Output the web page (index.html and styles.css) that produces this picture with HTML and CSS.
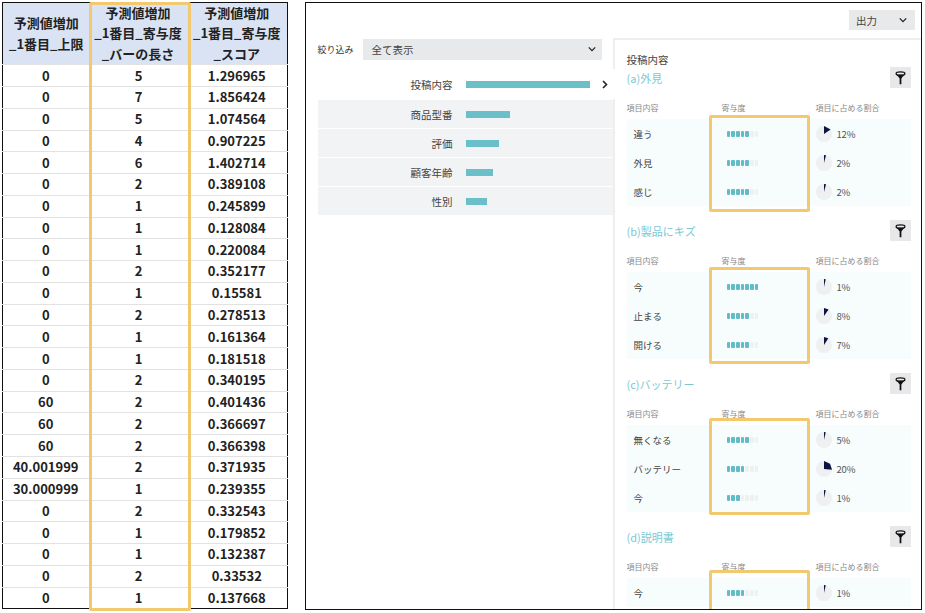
FILE: index.html
```html
<!DOCTYPE html>
<html lang="ja">
<head>
  <meta charset="UTF-8">
  <meta name="viewport" content="width=device-width, initial-scale=1.0">
  <title>予測値増加</title>
  <link rel="stylesheet" href="styles.css">
</head>
<body>
  <svg class="defs" width="0" height="0">
    <symbol id="chev-down" viewBox="0 0 10 6"><path d="M1 1l4 4 4-4" fill="none" stroke="#222" stroke-width="1.6"/></symbol>
    <symbol id="funnel" viewBox="0 0 12 16"><ellipse cx="6" cy="3" rx="5" ry="2" fill="none" stroke="#111" stroke-width="1.5"/><path d="M1.5 4L5 8.5V15h2V8.5L10.500 4z" fill="#111"/></symbol>
  </svg>

  <div class="sheet">
    <table class="data">
      <thead>
        <tr>
          <th>予測値増加<br>_1番目_上限</th>
          <th>予測値増加<br>_1番目_寄与度<br>_バーの長さ</th>
          <th>予測値増加<br>_1番目_寄与度<br>_スコア</th>
        </tr>
      </thead>
      <tbody>
        <tr><td>0</td><td>5</td><td>1.296965</td></tr>
        <tr><td>0</td><td>7</td><td>1.856424</td></tr>
        <tr><td>0</td><td>5</td><td>1.074564</td></tr>
        <tr><td>0</td><td>4</td><td>0.907225</td></tr>
        <tr><td>0</td><td>6</td><td>1.402714</td></tr>
        <tr><td>0</td><td>2</td><td>0.389108</td></tr>
        <tr><td>0</td><td>1</td><td>0.245899</td></tr>
        <tr><td>0</td><td>1</td><td>0.128084</td></tr>
        <tr><td>0</td><td>1</td><td>0.220084</td></tr>
        <tr><td>0</td><td>2</td><td>0.352177</td></tr>
        <tr><td>0</td><td>1</td><td>0.15581</td></tr>
        <tr><td>0</td><td>2</td><td>0.278513</td></tr>
        <tr><td>0</td><td>1</td><td>0.161364</td></tr>
        <tr><td>0</td><td>1</td><td>0.181518</td></tr>
        <tr><td>0</td><td>2</td><td>0.340195</td></tr>
        <tr><td>60</td><td>2</td><td>0.401436</td></tr>
        <tr><td>60</td><td>2</td><td>0.366697</td></tr>
        <tr><td>60</td><td>2</td><td>0.366398</td></tr>
        <tr><td>40.001999</td><td>2</td><td>0.371935</td></tr>
        <tr><td>30.000999</td><td>1</td><td>0.239355</td></tr>
        <tr><td>0</td><td>2</td><td>0.332543</td></tr>
        <tr><td>0</td><td>1</td><td>0.179852</td></tr>
        <tr><td>0</td><td>1</td><td>0.132387</td></tr>
        <tr><td>0</td><td>2</td><td>0.33532</td></tr>
        <tr><td>0</td><td>1</td><td>0.137668</td></tr>
      </tbody>
    </table>
    <div class="mark mark-col"></div>
  </div>

  <div class="panel">
    <div class="topbar">
      <div class="pick pick-out">出力<svg class="chev"><use href="#chev-down"/></svg></div>
    </div>
    <div class="split">
      <div class="side">
        <div class="filter">
          <span class="filter-label">絞り込み</span>
          <div class="pick pick-all">全て表示<svg class="chev"><use href="#chev-down"/></svg></div>
        </div>
        <div class="cat cat-on"><span class="cat-name">投稿内容</span><span class="cat-bar w-124"></span><span class="cat-arrow"><svg width="6" height="9" viewBox="0 0 6 9"><path d="M1 1l3.500 3.500L1 8" fill="none" stroke="#222" stroke-width="1.600"/></svg></span></div>
        <div class="cat"><span class="cat-name">商品型番</span><span class="cat-bar w-44"></span></div>
        <div class="cat"><span class="cat-name">評価</span><span class="cat-bar w-33"></span></div>
        <div class="cat"><span class="cat-name">顧客年齢</span><span class="cat-bar w-27"></span></div>
        <div class="cat"><span class="cat-name">性別</span><span class="cat-bar w-21"></span></div>
      </div>

      <div class="detail">
        <div class="detail-title">投稿内容</div>

        <section class="group">
          <div class="group-head">
            <span class="group-name">(a)外見</span>
            <button class="funnel-btn"><svg width="11" height="14"><use href="#funnel"/></svg></button>
          </div>
          <div class="cols"><span>項目内容</span><span>寄与度</span><span>項目に占める割合</span></div>
          <div class="rows">
            <div class="row"><span>違う</span><span class="meter"><i class="on"></i><i class="on"></i><i class="on"></i><i class="on"></i><i class="on"></i><i></i><i></i></span><span class="share"><svg class="pie" viewBox="0 0 16 16"><circle cx="8" cy="8" r="8"/><path d="M8 8V0L14.600 3.400z"/></svg>12%</span></div>
            <div class="row"><span>外見</span><span class="meter"><i class="on"></i><i class="on"></i><i class="on"></i><i class="on"></i><i class="on"></i><i></i><i></i></span><span class="share"><svg class="pie" viewBox="0 0 16 16"><circle cx="8" cy="8" r="8"/><path d="M8 8V0L10 .3z"/></svg>2%</span></div>
            <div class="row"><span>感じ</span><span class="meter"><i class="on"></i><i class="on"></i><i class="on"></i><i class="on"></i><i class="on"></i><i></i><i></i></span><span class="share"><svg class="pie" viewBox="0 0 16 16"><circle cx="8" cy="8" r="8"/><path d="M8 8V0L10 .3z"/></svg>2%</span></div>
            <div class="mark mark-a"></div>
          </div>
        </section>

        <section class="group">
          <div class="group-head">
            <span class="group-name">(b)製品にキズ</span>
            <button class="funnel-btn"><svg width="11" height="14"><use href="#funnel"/></svg></button>
          </div>
          <div class="cols"><span>項目内容</span><span>寄与度</span><span>項目に占める割合</span></div>
          <div class="rows">
            <div class="row"><span>今</span><span class="meter"><i class="on"></i><i class="on"></i><i class="on"></i><i class="on"></i><i class="on"></i><i class="on"></i><i class="on"></i></span><span class="share"><svg class="pie" viewBox="0 0 16 16"><circle cx="8" cy="8" r="8"/><path d="M8 8V0L9.700 .2z"/></svg>1%</span></div>
            <div class="row"><span>止まる</span><span class="meter"><i class="on"></i><i class="on"></i><i class="on"></i><i class="on"></i><i class="on"></i><i></i><i></i></span><span class="share"><svg class="pie" viewBox="0 0 16 16"><circle cx="8" cy="8" r="8"/><path d="M8 8V0L12.600 1.400z"/></svg>8%</span></div>
            <div class="row"><span>開ける</span><span class="meter"><i class="on"></i><i class="on"></i><i class="on"></i><i class="on"></i><i class="on"></i><i></i><i></i></span><span class="share"><svg class="pie" viewBox="0 0 16 16"><circle cx="8" cy="8" r="8"/><path d="M8 8V0L12.300 1.200z"/></svg>7%</span></div>
            <div class="mark mark-b"></div>
          </div>
        </section>

        <section class="group">
          <div class="group-head">
            <span class="group-name">(c)バッテリー</span>
            <button class="funnel-btn"><svg width="11" height="14"><use href="#funnel"/></svg></button>
          </div>
          <div class="cols"><span>項目内容</span><span>寄与度</span><span>項目に占める割合</span></div>
          <div class="rows">
            <div class="row"><span>無くなる</span><span class="meter"><i class="on"></i><i class="on"></i><i class="on"></i><i class="on"></i><i class="on"></i><i></i><i></i></span><span class="share"><svg class="pie" viewBox="0 0 16 16"><circle cx="8" cy="8" r="8"/><path d="M8 8V0L9.700 .2z"/></svg>5%</span></div>
            <div class="row"><span>バッテリー</span><span class="meter"><i class="on"></i><i class="on"></i><i class="on"></i><i class="on"></i><i></i><i></i><i></i></span><span class="share"><svg class="pie" viewBox="0 0 16 16"><circle cx="8" cy="8" r="8"/><path d="M8 8V0L14 2.700 16 8.700z"/></svg>20%</span></div>
            <div class="row"><span>今</span><span class="meter"><i class="on"></i><i class="on"></i><i class="on"></i><i></i><i></i><i></i><i></i></span><span class="share"><svg class="pie" viewBox="0 0 16 16"><circle cx="8" cy="8" r="8"/><path d="M8 8V0L9.700 .2z"/></svg>1%</span></div>
            <div class="mark mark-c"></div>
          </div>
        </section>

        <section class="group">
          <div class="group-head">
            <span class="group-name">(d)説明書</span>
            <button class="funnel-btn"><svg width="11" height="14"><use href="#funnel"/></svg></button>
          </div>
          <div class="cols"><span>項目内容</span><span>寄与度</span><span>項目に占める割合</span></div>
          <div class="rows">
            <div class="row"><span>今</span><span class="meter"><i class="on"></i><i class="on"></i><i class="on"></i><i class="on"></i><i></i><i></i><i></i></span><span class="share"><svg class="pie" viewBox="0 0 16 16"><circle cx="8" cy="8" r="8"/><path d="M8 8V0L9.700 .2z"/></svg>1%</span></div>
            <div class="mark mark-d"></div>
          </div>
        </section>
      </div>
    </div>
  </div>
</body>
</html>
```

FILE: styles.css
```css
* {
  box-sizing: border-box;
}
html, body {
  height: 100%;
}
body {
  margin: 0;
  padding: 2px 3px 3px 2px;
  display: flex;
  gap: 17px;
  background: white;
  overflow: hidden;
  font-family: "Noto Sans CJK JP", "Noto Sans", sans-serif;
  color: #333;
}
.defs {
  position: absolute;
}

/* left: spreadsheet */
.sheet {
  position: relative;
  width: 286px;
  height: 608px;
  flex: none;
}
.data {
  width: 286px;
  height: 607px;
  table-layout: fixed;
  border-collapse: collapse;
  border: 1.5px solid #111;
  font-weight: bold;
  font-size: 13px;
  color: #222;
  text-align: center;
}
.data th {
  height: 61px;
  padding: 0;
  background: #dae3f3;
  font-size: 13px;
  line-height: 20.400px;
  font-weight: bold;
}
.data td {
  height: 21.780px;
  padding: 0;
  line-height: 18px;
  border-top: 1.5px solid #e2e2e2;
}
.data td:first-child {
  border-right: 2px solid #e2e2e2;
}
.data th:nth-child(1) { width: 87px; }
.data th:nth-child(2) { width: 97px; }

.mark {
  position: absolute;
  border: 3px solid #f3c96f;
  border-radius: 2px;
  pointer-events: none;
}
.mark-col { left: 87px; top: 0; width: 102px; height: 609px; }
.mark-a { left: 82px; top: -4px; width: 101px; height: 97px; }
.mark-b { left: 82px; top: -5px; width: 101px; height: 97px; }
.mark-c { left: 82px; top: -7px; width: 101px; height: 97px; }
.mark-d { left: 82px; top: -8px; width: 101px; height: 60px; }

/* right: analysis panel */
.panel {
  flex: 1;
  height: 608px;
  display: flex;
  flex-direction: column;
  border: 1.5px solid #111;
  overflow: hidden;
}
.topbar {
  height: 35px;
  flex: none;
  display: flex;
  justify-content: flex-end;
  padding: 7px 6px 0 0;
}
.pick {
  display: flex;
  align-items: center;
  justify-content: space-between;
  background: #e8e9eb;
  font-size: 10.500px;
  color: #444;
}
.chev {
  width: 8px;
  height: 6px;
}
.pick-out {
  width: 66px;
  height: 20px;
  padding: 0 8px 0 7px;
}
.split {
  flex: 1;
  display: flex;
  min-height: 0;
}
.side {
  width: 306.500px;
  flex: none;
  padding-left: 11.500px;
}
.filter {
  display: flex;
  align-items: center;
  height: 22px;
  margin-bottom: 9px;
}
.filter-label {
  width: 45px;
  font-size: 9px;
  color: #333;
}
.pick-all {
  width: 239px;
  height: 21px;
  padding: 0 6px 0 9px;
}
.cat {
  display: flex;
  align-items: center;
  height: 28px;
  margin-bottom: 1px;
  background: #f2f3f5;
  font-size: 10.500px;
  color: #444;
}
.cat-on {
  position: relative;
  height: 30px;
  margin-right: -2px;
  background: white;
}
.cat-name {
  width: 135px;
  text-align: right;
  flex: none;
}
.cat-bar {
  height: 7px;
  margin-left: 13px;
  background: #6bbfc9;
}
.cat-arrow {
  display: flex;
  margin-left: 12px;
}
.w-124 { width: 124px; }
.w-44 { width: 44px; }
.w-33 { width: 33px; }
.w-27 { width: 27px; }
.w-21 { width: 21px; }

.detail {
  flex: 1;
  min-width: 0;
  border-top: 2px solid #eeeeee;
  border-left: 2px solid #eeeeee;
  padding: 13px 10.500px 0 12px;
}
.detail-title {
  height: 14px;
  line-height: 14px;
  font-size: 10.500px;
  color: #444;
}
.group {
  margin-bottom: 14px;
}
.group-head {
  display: flex;
  justify-content: space-between;
  height: 21px;
}
.group-name {
  font-size: 11px;
  line-height: 22px;
  color: #7cc8d2;
}
.funnel-btn {
  width: 21px;
  height: 21px;
  padding: 0;
  display: flex;
  align-items: center;
  justify-content: center;
  border: 0;
  background: #e8e8ea;
}
.cols {
  display: grid;
  grid-template-columns: 95px 94px 1fr;
  height: 31px;
  padding-top: 14px;
  font-size: 8px;
  line-height: 12px;
  color: #888;
}
.rows {
  position: relative;
  background: #f7fcfd;
}
.row {
  display: grid;
  grid-template-columns: 95px 94px 1fr;
  align-items: center;
  height: 29px;
  font-size: 9.500px;
  color: #444;
}
.row > span:first-child {
  padding-left: 7px;
}
.meter {
  display: flex;
  gap: 1px;
  padding-left: 5px;
}
.meter i {
  width: 3.700px;
  height: 6px;
  border-radius: 1px;
  background: #eef0f1;
}
.meter i.on {
  background: #62bcc8;
}
.share {
  display: flex;
  align-items: center;
  gap: 5px;
  font-size: 9.500px;
  letter-spacing: -0.200px;
  color: #555;
}
.pie {
  width: 16px;
  height: 16px;
}
.pie circle {
  fill: #eef0f1;
}
.pie path {
  fill: #0c1440;
}
```
